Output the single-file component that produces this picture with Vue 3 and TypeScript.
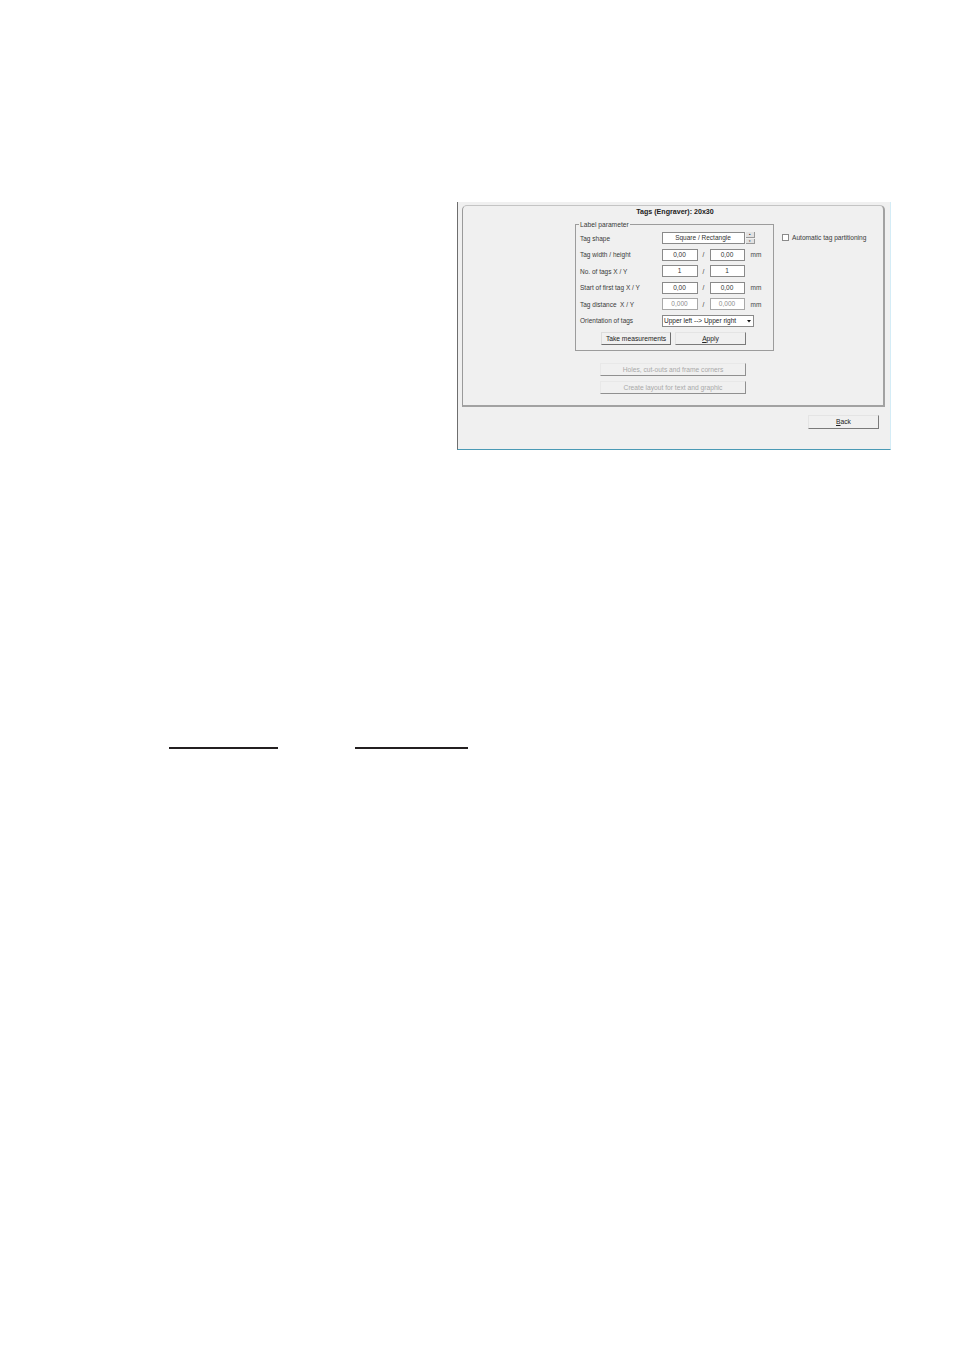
<script setup lang="ts">
interface Row {
  label: string
  a: string
  b: string
  unit: string
  muted?: boolean
}
const rowsA: Row[] = [
  { label: 'Tag width / height', a: '0,00', b: '0,00', unit: 'mm' },
  { label: 'No. of tags X / Y', a: '1', b: '1', unit: '' },
  { label: 'Start of first tag X / Y', a: '0,00', b: '0,00', unit: 'mm' },
  { label: 'Tag distance  X / Y', a: '0,000', b: '0,000', unit: 'mm', muted: true },
]
</script>

<template>
  <div class="page">
    <section class="window">
      <div class="panel">
        <h1 class="title">Tags (Engraver): 20x30</h1>
        <div class="upper">
          <fieldset class="group">
            <legend>Label parameter</legend>
            <div class="row">
              <span class="label">Tag shape</span>
              <span class="field wide">Square / Rectangle</span>
              <span class="spin"><i>▴</i><i>▾</i></span>
            </div>
            <div v-for="r in rowsA" :key="r.label" class="row">
              <span class="label">{{ r.label }}</span>
              <span class="field" :class="{ muted: r.muted }">{{ r.a }}</span>
              <span class="slash">/</span>
              <span class="field second" :class="{ muted: r.muted }">{{ r.b }}</span>
              <span class="unit">{{ r.unit }}</span>
            </div>
            <div class="row">
              <span class="label">Orientation of tags</span>
              <span class="select">
                <span class="select-text">Upper left --&gt; Upper right</span>
                <svg class="caret" viewBox="0 0 6 4" width="6" height="4"><path d="M1 1h4L3 3.4z" fill="#111" /></svg>
              </span>
            </div>
            <div class="actions">
              <button class="btn take">Take measurements</button>
              <button class="btn apply"><u>A</u>pply</button>
            </div>
          </fieldset>
          <label class="auto">
            <span class="check"></span>
            <span>Automatic tag partitioning</span>
          </label>
        </div>
        <div class="disabled-stack">
          <button class="btn off">Holes, cut-outs and frame corners</button>
          <button class="btn off">Create layout for text and graphic</button>
        </div>
      </div>
      <div class="footer">
        <button class="btn back"><u>B</u>ack</button>
      </div>
    </section>
    <div class="signatures">
      <span class="sig first"></span>
      <span class="sig second"></span>
    </div>
  </div>
</template>

<style>
html, body { margin: 0; background: #fff; }
</style>

<style scoped>
.page {
  width: 954px;
  height: 1350px;
  background: #fff;
  overflow: hidden;
  font-family: "Liberation Sans", Arial, sans-serif;
  font-size: 6.5px;
  color: #3a3a3a;
  padding-top: 202px;
  box-sizing: border-box;
}
.window {
  width: 434px;
  height: 248px;
  margin-left: 457px;
  box-sizing: border-box;
  background: #f0f0f0;
  border-left: 1px solid #6e6e6e;
  border-right: 1px solid #d4ecf6;
  border-bottom: 1px solid #4a9ab5;
  padding: 3px 5px 0 4px;
}
.panel {
  height: 202px;
  box-sizing: border-box;
  border: 1px solid #c4c4c4;
  border-right: 2px solid #a2a2a2;
  border-bottom: 2px solid #a2a2a2;
  border-left-color: #9a9a9a;
  border-radius: 5px 5px 0 0;
  display: flex;
  flex-direction: column;
}
.title {
  margin: 0;
  padding: 2px 0 0 4px;
  height: 14px;
  box-sizing: border-box;
  text-align: center;
  font-size: 7.1px;
  line-height: 8px;
  font-weight: 700;
  color: #222;
}
.upper {
  display: flex;
  align-items: flex-start;
  padding: 1px 0 0 112px;
}
.group {
  width: 199px;
  height: 130px;
  flex: none;
  box-sizing: border-box;
  margin: 0;
  padding: 2px 0 0 4px;
  border: 1px solid #9c9c9c;
  min-width: 0;
}
legend {
  margin-left: -1px;
  padding: 0 1px;
  font-size: 6.7px;
  line-height: 7px;
}
.row {
  height: 16.5px;
  display: flex;
  align-items: center;
}
.label {
  width: 81.5px;
  flex: none;
  white-space: pre;
}
.field {
  width: 36px;
  height: 12px;
  box-sizing: border-box;
  flex: none;
  background: #fff;
  border: 1px solid #8a8a8a;
  text-align: center;
  line-height: 10px;
  color: #333;
}
.field.second { width: 35px; }
.field.wide { width: 83px; }
.field.muted { color: #8c8c8c; border-color: #a8a8a8; }
.slash {
  width: 12px;
  flex: none;
  text-align: center;
}
.unit {
  margin-left: 6px;
  color: #444;
}
.spin {
  width: 9px;
  height: 12px;
  margin-left: 1px;
  display: flex;
  flex-direction: column;
  gap: 1px;
}
.spin i {
  flex: 1;
  min-height: 0;
  background: #e2e2e2;
  border-right: 1px solid #999;
  border-bottom: 1px solid #999;
  font-style: normal;
  font-size: 3px;
  line-height: 4px;
  text-align: center;
  color: #222;
  overflow: hidden;
}
.select {
  width: 92px;
  height: 12px;
  box-sizing: border-box;
  background: #fff;
  border: 1px solid #8a8a8a;
  display: flex;
  align-items: center;
  justify-content: space-between;
  padding: 0 1px 0 1.5px;
  white-space: nowrap;
}
.select-text { color: #222; }
.caret { flex: none; }
.actions {
  display: flex;
  gap: 4px;
  padding: 3px 0 0 21px;
}
.btn {
  margin: 0;
  padding: 0;
  font-family: inherit;
  font-size: 6.7px;
  height: 13px;
  line-height: 10px;
  box-sizing: border-box;
  background: #f0f0f0;
  color: #222;
  border: 1px solid #e4e4e4;
  border-right-color: #7a7a7a;
  border-bottom-color: #7a7a7a;
}
.take { width: 70px; border-color: #dcdcdc #6e6e6e #6e6e6e #dcdcdc; }
.apply { width: 71px; }
.disabled-stack {
  display: flex;
  flex-direction: column;
  gap: 5px;
  padding: 12px 0 0 137px;
}
.off {
  width: 146px;
  color: #a9a9a9;
  border-color: #e8e8e8 #909090 #909090 #e8e8e8;
}
.footer {
  display: flex;
  justify-content: flex-end;
  padding: 8px 6px 0 0;
}
.back {
  width: 71px;
  height: 14px;
}
.auto {
  display: flex;
  align-items: center;
  gap: 3px;
  height: 8px;
  margin: 12.5px 0 0 8px;
  white-space: nowrap;
  font-size: 6.6px;
}
.check {
  width: 7px;
  height: 7px;
  box-sizing: border-box;
  flex: none;
  background: #fff;
  border: 1px solid #8a8a8a;
}
.signatures {
  height: 2px;
  margin-top: 296.5px;
  padding-left: 169px;
  display: flex;
  gap: 77px;
}
.sig {
  height: 2px;
  background: #231f20;
}
.sig.first { width: 109px; }
.sig.second { width: 113px; }
</style>
